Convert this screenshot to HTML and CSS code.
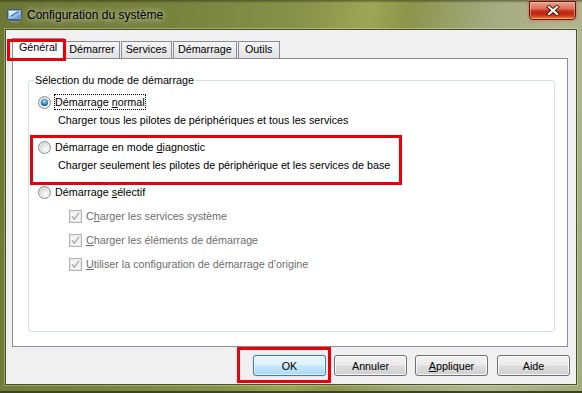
FILE: index.html
```html
<!DOCTYPE html>
<html lang="fr">
<head>
<meta charset="utf-8">
<title>Configuration du système</title>
<link rel="stylesheet" href="styles.css">
</head>
<body>
<div class="window">
  <div class="titlebar">
    <svg class="app-icon" width="15" height="14" viewBox="0 0 15 14">
      <defs>
        <linearGradient id="scr" x1="0" y1="0" x2="1" y2="1">
          <stop offset="0" stop-color="#ffffff"/>
          <stop offset="0.45" stop-color="#b9dcf7"/>
          <stop offset="1" stop-color="#3f86d0"/>
        </linearGradient>
      </defs>
      <rect x="0.5" y="0.5" width="14" height="10" rx="1" fill="#8fa7c2" stroke="#3c5a80"/>
      <rect x="2" y="2" width="11" height="7" fill="url(#scr)"/>
      <path d="M3.5 7.5 L11.5 2.5" stroke="#2f6fb8" stroke-width="1.2"/>
      <rect x="5" y="11" width="5" height="1" fill="#4f5e70"/>
      <rect x="3" y="12" width="9" height="1.5" fill="#7c8aa0"/>
    </svg>
    <span class="title">Configuration du système</span>
    <div class="close">
      <svg width="14" height="11" viewBox="0 0 14 11">
        <path d="M3 2 L11 9 M11 2 L3 9" stroke="#4a1208" stroke-width="4" stroke-linecap="square"/>
        <path d="M3 2 L11 9 M11 2 L3 9" stroke="#ffffff" stroke-width="2.2" stroke-linecap="square"/>
      </svg>
    </div>
  </div>

  <div class="client">
    <div class="tabs">
      <div class="tab active marked">Général</div>
      <div class="tab">Démarrer</div>
      <div class="tab">Services</div>
      <div class="tab">Démarrage</div>
      <div class="tab">Outils</div>
    </div>

    <div class="panel">
      <fieldset class="group">
        <legend>Sélection du mode de démarrage</legend>
        <div class="opts">
          <div class="option">
            <span class="radio checked"></span>
            <span class="label focus">Démarrage <u>n</u>ormal</span>
          </div>
          <div class="desc">Charger tous les pilotes de périphériques et tous les services</div>

          <div class="marked-block">
            <div class="option">
              <span class="radio"></span>
              <span class="label">Démarrage en mode <u>d</u>iagnostic</span>
            </div>
            <div class="desc">Charger seulement les pilotes de périphérique et les services de base</div>
          </div>

          <div class="option sel">
            <span class="radio"></span>
            <span class="label">Démarrage <u>s</u>électif</span>
          </div>

          <div class="checkrow">
            <span class="check"><svg width="11" height="11" viewBox="0 0 11 11"><path d="M2 5.5 L4.3 8.2 L9 1.8" fill="none" stroke="#a9a9a9" stroke-width="1.3"/></svg></span>
            <span class="label dis">C<u>h</u>arger les services système</span>
          </div>
          <div class="checkrow">
            <span class="check"><svg width="11" height="11" viewBox="0 0 11 11"><path d="M2 5.5 L4.3 8.2 L9 1.8" fill="none" stroke="#a9a9a9" stroke-width="1.3"/></svg></span>
            <span class="label dis"><u>C</u>harger les éléments de démarrage</span>
          </div>
          <div class="checkrow last">
            <span class="check"><svg width="11" height="11" viewBox="0 0 11 11"><path d="M2 5.5 L4.3 8.2 L9 1.8" fill="none" stroke="#a9a9a9" stroke-width="1.3"/></svg></span>
            <span class="label dis"><u>U</u>tiliser la configuration de démarrage d’origine</span>
          </div>
        </div>
      </fieldset>
    </div>

    <div class="buttons">
      <button class="btn default marked-ok">OK</button>
      <button class="btn">Annuler</button>
      <button class="btn"><u>A</u>ppliquer</button>
      <button class="btn aide">Aide</button>
    </div>
  </div>
</div>
</body>
</html>
```
FILE: styles.css
```css
*, *::before, *::after { box-sizing: border-box; }
html, body { margin: 0; padding: 0; }
body {
  width: 582px;
  height: 393px;
  overflow: hidden;
  font-family: "Liberation Sans", Arial, sans-serif;
  font-size: 10.75px;
  color: #000;
  background: #7f8a42;
}
u { text-decoration: underline; text-underline-offset: 1px; }

.window {
  width: 582px;
  height: 393px;
  display: flex;
  flex-direction: column;
  background:
    linear-gradient(180deg, rgba(40,46,18,0.55) 0px, rgba(40,46,18,0) 3px),
    linear-gradient(102deg, #6c7735 0%, #76823c 25%, #86914a 45%, #9da654 56%, #8b954b 62%, #a3aa7f 74%, #b2b792 86%, #a2aa7a 100%);
  box-shadow: inset 0 -2px 0 #3c4320;
}

.titlebar {
  height: 29px;
  display: flex;
  align-items: flex-start;
  flex: none;
}
.app-icon { margin: 9px 0 0 7px; flex: none; }
.title {
  margin: 8px 0 0 5px;
  font-size: 12px;
  line-height: 14px;
  color: #000;
  text-shadow: 0 0 6px rgba(255,255,255,0.75), 0 0 10px rgba(255,255,255,0.5);
}
.close {
  margin: 1px 6px 0 auto;
  width: 47px;
  height: 19px;
  border: 1px solid #5a1a10;
  border-radius: 0 0 4px 4px;
  background: linear-gradient(180deg, #eaa393 0%, #dc6f59 40%, #c8301a 52%, #bb2810 70%, #db511e 88%, #f29a4a 100%);
  box-shadow: 0 0 3px 1px rgba(230,90,60,0.55), inset 0 0 0 1px rgba(255,200,180,0.45);
  display: flex;
  align-items: center;
  justify-content: center;
}

.client {
  margin: 0 5px;
  width: 572px;
  height: 356px;
  border: 1px solid #46502a;
  box-shadow: 0 0 0 1px rgba(235,240,210,0.35);
  background: #f0f0f0;
  display: flex;
  flex-direction: column;
  flex: none;
}

.tabs {
  height: 28px;
  display: flex;
  align-items: flex-end;
  padding-left: 6px;
  gap: 1px;
  flex: none;
}
.tab {
  height: 17px;
  min-width: 42px;
  padding: 0 4px;
  border: 1px solid #898c95;
  border-bottom: none;
  background: linear-gradient(180deg, #f4f4f4 0%, #ececec 50%, #e2e2e2 100%);
  line-height: 15px;
  text-align: center;
  white-space: nowrap;
}
.tab.active {
  height: 21px;
  padding: 0 6px;
  margin-bottom: -1px;
  margin-right: -1px;
  background: #fff;
  position: relative;
  z-index: 1;
  line-height: 17px;
}
.marked::after {
  content: "";
  position: absolute;
  left: -6px;
  top: 0;
  width: 59px;
  height: 22px;
  border: 3px solid #e8000b;
}

.panel {
  margin: 0 8px 0 6px;
  height: 289px;
  border: 1px solid #898c95;
  background: #fff;
  display: flex;
  flex-direction: column;
  flex: none;
}

.group {
  flex: 1;
  margin: 14px 12px 14px 15px;
  border: 1px solid #d5dfe5;
  border-radius: 3px;
  padding: 0 0 0 5px;
  min-width: 0;
}
.group legend {
  padding: 0 1px;
  line-height: 14px;
}
.opts {
  margin-left: 4px;
  padding-top: 7px;
}

.option {
  display: flex;
  align-items: center;
  height: 16px;
}
.desc {
  margin-top: 2px;
  margin-left: 20px;
  height: 16px;
  line-height: 16px;
}
.label {
  border: 1px solid transparent;
  line-height: 14px;
  padding: 0;
  white-space: nowrap;
}
.label.focus { border: 1px dotted #000; }
.label.dis { color: #6d6d6d; }

.radio {
  flex: none;
  width: 13px;
  height: 13px;
  margin-right: 3px;
  border-radius: 50%;
  border: 1px solid #8a8b8c;
  background: radial-gradient(circle at 60% 65%, #fbfbfb 0%, #ececec 30%, #d6d6d6 65%, #c4c4c4 100%);
  box-shadow: inset 0 0 0 1px rgba(255,255,255,0.5);
  position: relative;
}
.radio.checked::after {
  content: "";
  position: absolute;
  left: 2px;
  top: 2px;
  width: 7px;
  height: 7px;
  border-radius: 50%;
  background: radial-gradient(circle at 50% 35%, #b8ecff 0%, #46a5de 35%, #1d5b98 70%, #0f2d55 100%);
}

.marked-block {
  position: relative;
  margin-top: 11px;
}
.marked-block::after {
  content: "";
  position: absolute;
  left: -8px;
  top: -4px;
  width: 372px;
  height: 50px;
  border: 3px solid #e8000b;
}
.option.sel { margin-top: 11px; }

.checkrow {
  display: flex;
  align-items: center;
  height: 16px;
  margin-top: 8px;
}
.check {
  flex: none;
  width: 13px;
  height: 13px;
  margin: 0 3px 0 31px;
  border: 1px solid #b4b4b4;
  background: #f4f4f4;
  box-shadow: inset 0 0 0 1px #e9e9e9;
  display: flex;
  align-items: center;
  justify-content: center;
}
.check svg { display: block; }

.buttons {
  margin-top: 8px;
  display: flex;
  justify-content: flex-end;
  gap: 8px;
  padding-right: 6px;
  flex: none;
}
.btn {
  width: 73px;
  height: 21px;
  padding: 0;
  font-family: inherit;
  font-size: 10.75px;
  color: #000;
  border: 1px solid #707070;
  border-radius: 3px;
  background: linear-gradient(180deg, #f2f2f2 0%, #ebebeb 48%, #dddddd 52%, #cfcfcf 100%);
  box-shadow: inset 0 0 0 1px rgba(255,255,255,0.8);
}
.btn.default {
  border-color: #3c7fb1;
  background: linear-gradient(180deg, #ebf6fd 0%, #dcf0fb 48%, #c3e6f9 52%, #aed9f2 100%);
  box-shadow: inset 0 0 0 1px rgba(255,255,255,0.6), 0 0 1px #48a0e0;
  position: relative;
}
.btn.aide { margin-left: 1px; }
.marked-ok::after {
  content: "";
  position: absolute;
  left: -17px;
  top: -9px;
  width: 94px;
  height: 36px;
  border: 3px solid #e8000b;
}
```
